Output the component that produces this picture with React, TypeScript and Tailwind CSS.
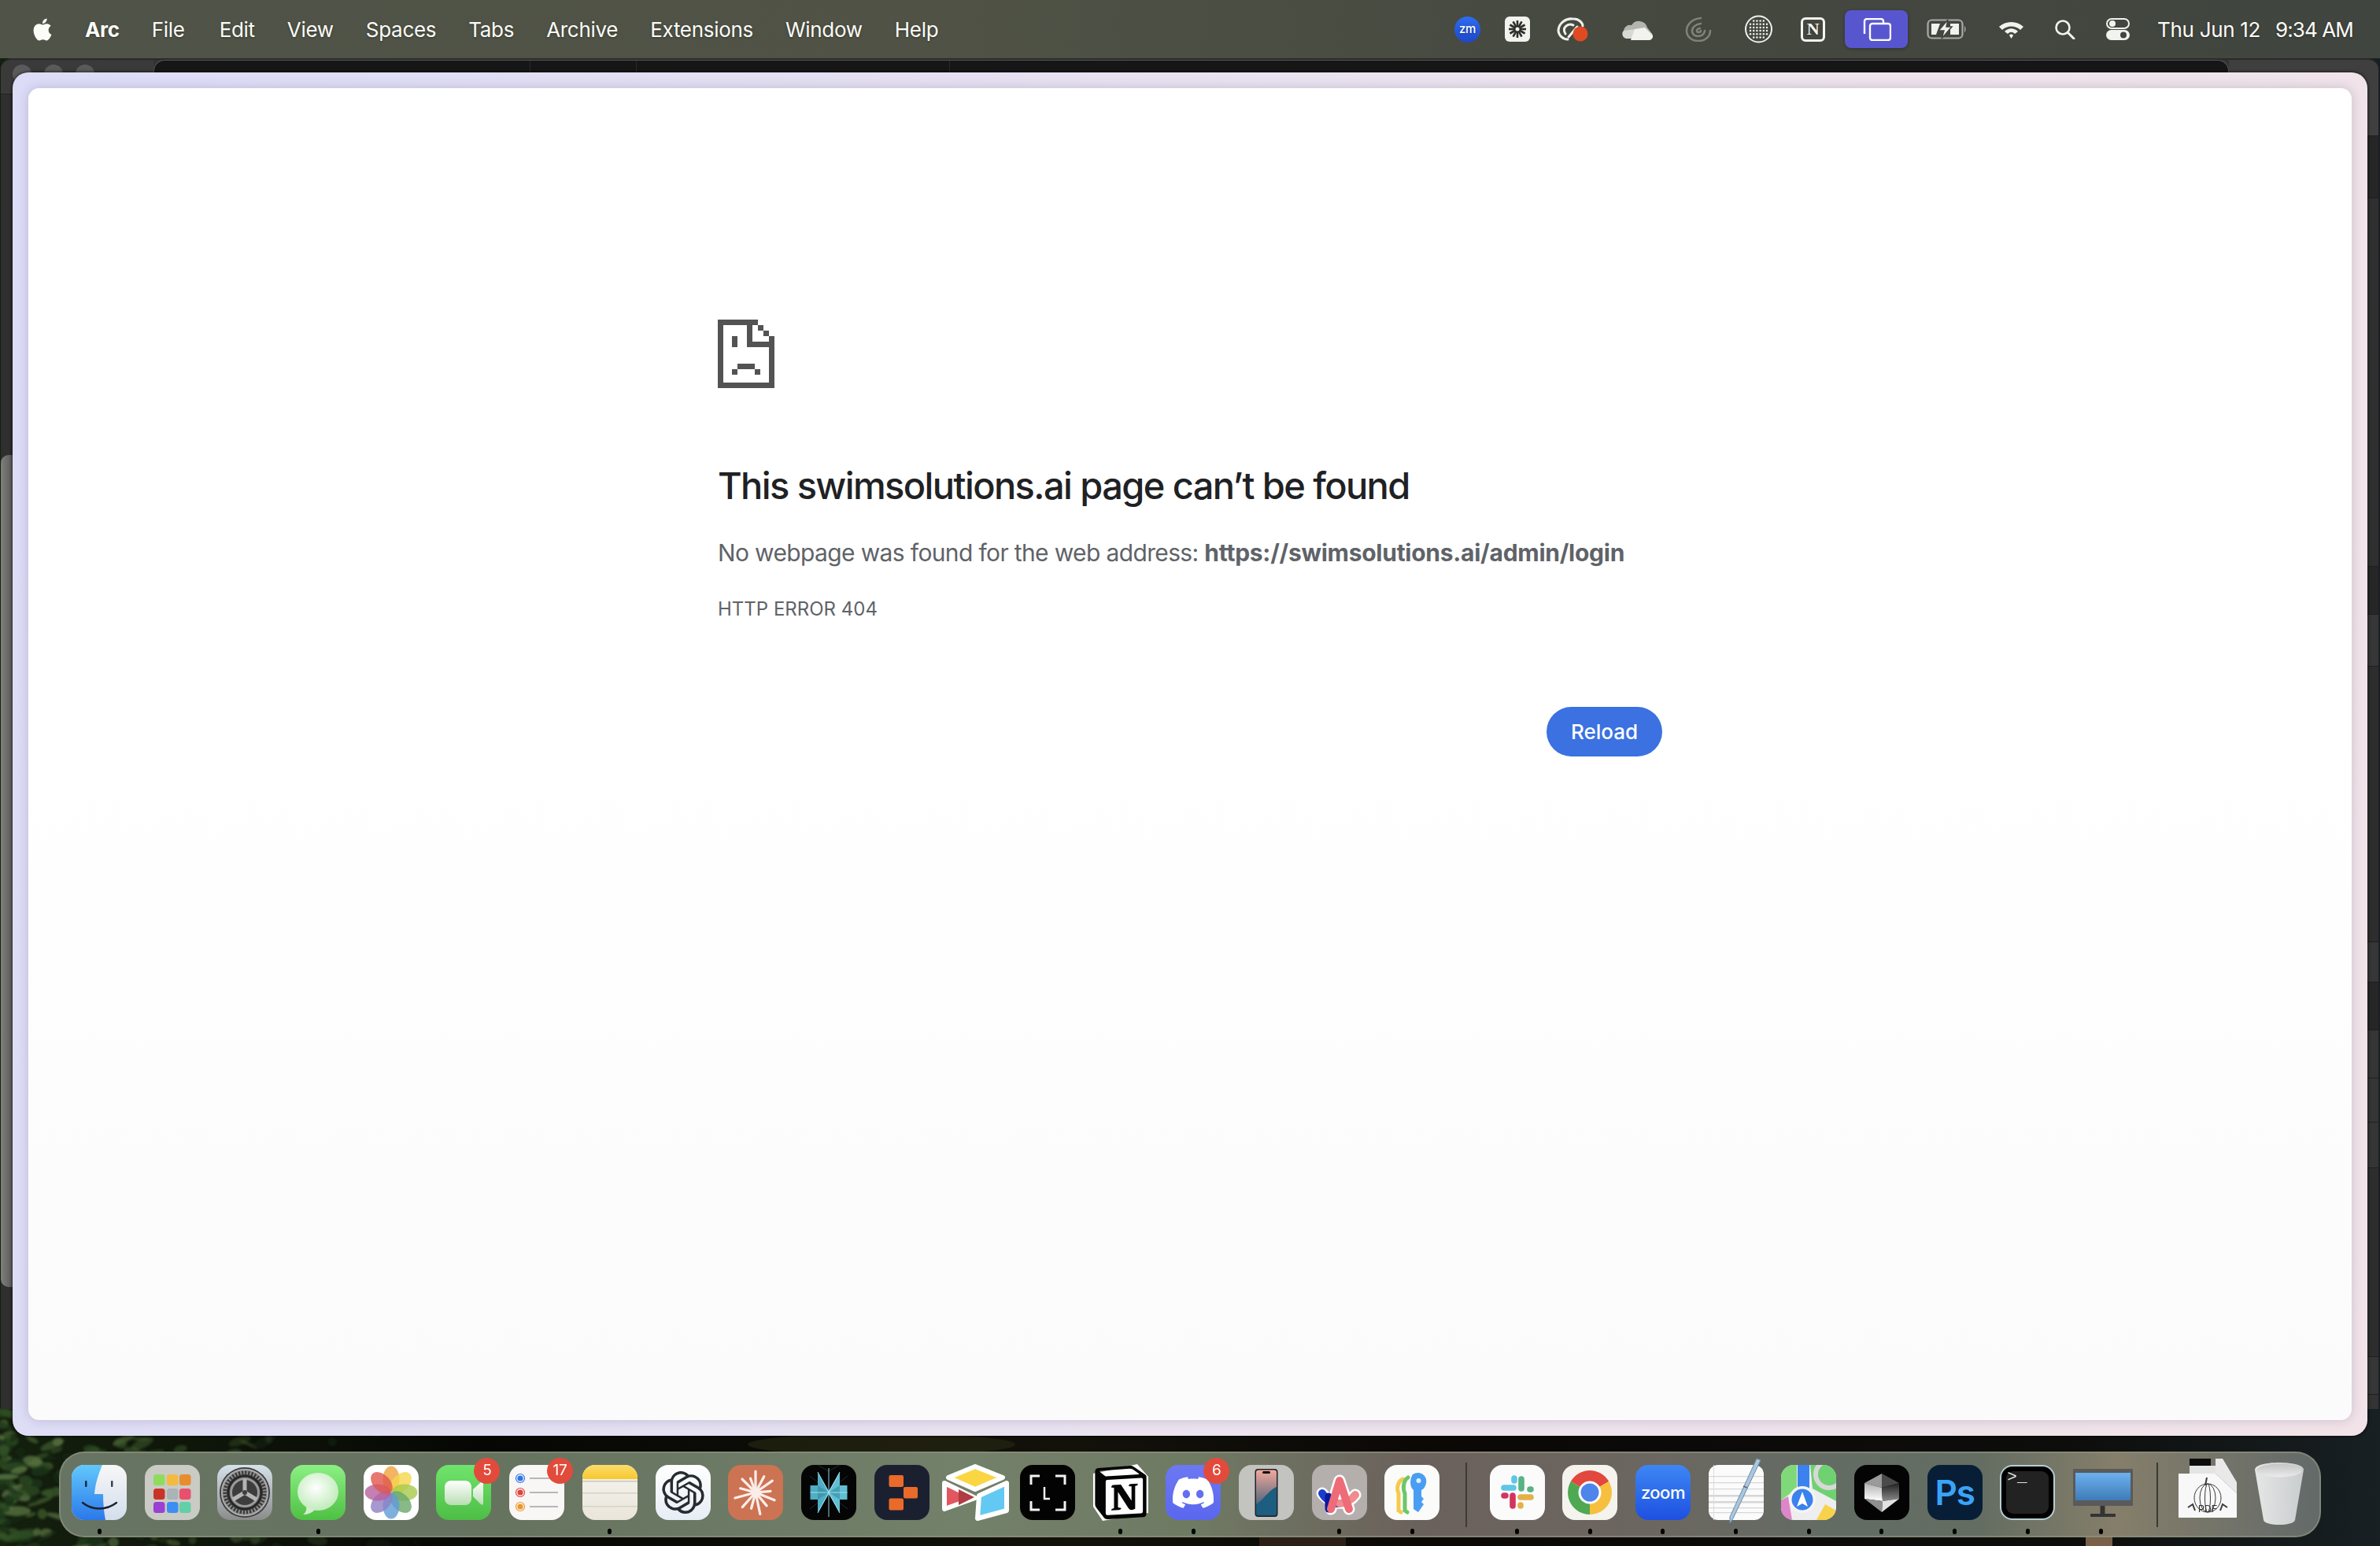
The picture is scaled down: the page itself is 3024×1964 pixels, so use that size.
import React from "react";
import { SiOpenai, SiDiscord, SiNotion, SiApple } from "react-icons/si";

const Squircle = ({ fill, children, stroke }: { fill: string; children?: React.ReactNode; stroke?: string }) => (
  <svg width="70" height="70" viewBox="0 0 70 70" className="overflow-visible block">
    <rect x="0" y="0" width="70" height="70" rx="16" fill={fill} stroke={stroke} />
    {children}
  </svg>
);

const Grad = ({ id, a, b, x2 = 0, y2 = 1 }: { id: string; a: string; b: string; x2?: number; y2?: number }) => (
  <linearGradient id={id} x1="0" y1="0" x2={x2} y2={y2}>
    <stop offset="0" stopColor={a} />
    <stop offset="1" stopColor={b} />
  </linearGradient>
);

const Finder = () => (
  <svg width="70" height="70" viewBox="0 0 70 70" className="block">
    <defs>
      <Grad id="fb" a="#62c8fb" b="#2b78ea" />
      <Grad id="fw" a="#f7f7f8" b="#d3deec" />
    </defs>
    <rect width="70" height="70" rx="16" fill="url(#fw)" />
    <path d="M16 0H39C34 12 30 24 29 37H40C40 48 41 60 43 70H16A16 16 0 0 1 0 54V16A16 16 0 0 1 16 0Z" fill="url(#fb)" />
    <rect x="17" y="20" width="2.5" height="8" rx="1" fill="#1d2a3a" />
    <rect x="50" y="20" width="2.5" height="8" rx="1" fill="#3a4250" />
    <path d="M14 48C26 58 44 58 57 48" fill="none" stroke="#1b2230" strokeWidth="2.4" strokeLinecap="round" />
  </svg>
);

const Launchpad = () => {
  const cols = [11, 28, 44];
  const rows = [12, 30, 47];
  const c = ["#8fdc5c", "#f4ba3e", "#e98c2f", "#c9342a", "#aab3b6", "#e9506d", "#9a40d2", "#3d8ef2", "#62cfa9"];
  return (
    <Squircle fill="#c9cbc4">
      {rows.map((y, r) => cols.map((x, i) => <rect key={`${r}${i}`} x={x} y={y} width="14.5" height="14" rx="3.5" fill={c[r * 3 + i]} />))}
    </Squircle>
  );
};

const Settings = () => (
  <svg width="70" height="70" viewBox="0 0 70 70" className="block">
    <defs><Grad id="sg" a="#d5e2ea" b="#8b8b8b" /></defs>
    <rect width="70" height="70" rx="16" fill="url(#sg)" />
    <circle cx="35" cy="35" r="32" fill="#3a3a3b" />
    <circle cx="35" cy="35" r="29" fill="none" stroke="#a8a8a8" strokeWidth="2.5" />
    <circle cx="35" cy="35" r="25.5" fill="none" stroke="#8d8d8d" strokeWidth="5" strokeDasharray="2 2.2" />
    <circle cx="35" cy="35" r="21" fill="#3d3d3e" stroke="#222" strokeWidth="1.5" />
    <circle cx="35" cy="35" r="17.5" fill="none" stroke="#9a9a9a" strokeWidth="3" />
    <path d="M35 35L35 18M35 35L20 44M35 35L50 44" stroke="#b5b5b5" strokeWidth="5" />
    <circle cx="35" cy="35" r="3" fill="#3d3d3e" />
  </svg>
);

const Messages = () => (
  <svg width="70" height="70" viewBox="0 0 70 70" className="block">
    <defs>
      <Grad id="mg" a="#8bf083" b="#4fc044" />
      <radialGradient id="mb" cx=".45" cy=".4" r=".7"><stop offset="0" stopColor="#ffffff" /><stop offset="1" stopColor="#b6e8ae" /></radialGradient>
    </defs>
    <rect width="70" height="70" rx="16" fill="url(#mg)" />
    <ellipse cx="35" cy="34" rx="26" ry="24" fill="url(#mb)" />
    <path d="M20 52C21 58 19 61 16 63C22 63 27 61 31 57Z" fill="#cfeecb" />
  </svg>
);

const Photos = () => {
  const p = ["#f0a13c", "#f5d64c", "#a8c94a", "#6aa76a", "#5f9bd6", "#8f7fc4", "#b85f9e", "#e0564c"];
  return (
    <Squircle fill="#ffffff">
      {p.map((c, i) => (
        <ellipse key={i} cx="35" cy="18" rx="10.5" ry="16.5" fill={c} fillOpacity="0.8" transform={`rotate(${i * 45} 35 35)`} />
      ))}
    </Squircle>
  );
};

const FaceTime = () => (
  <svg width="70" height="70" viewBox="0 0 70 70" className="block">
    <defs>
      <Grad id="ft" a="#6fe46c" b="#4dbd45" />
      <Grad id="fc" a="#ffffff" b="#b9deb4" />
    </defs>
    <rect width="70" height="70" rx="16" fill="url(#ft)" />
    <rect x="11" y="20" width="34" height="31" rx="8" fill="url(#fc)" />
    <path d="M47 31L57 22C58 21 60 21 60 23V49C60 51 58 51 57 50L47 40Z" fill="url(#fc)" />
  </svg>
);

const Reminders = () => (
  <Squircle fill="#f8f7f5">
    {[[17, "#2f74e8"], [35, "#e2423a"], [53, "#ec962c"]].map(([y, c]) => (
      <g key={String(c)}>
        <circle cx="14" cy={y as number} r="5.5" fill="none" stroke={c as string} strokeWidth="1.2" />
        <circle cx="14" cy={y as number} r="3.6" fill={c as string} />
        <rect x="26" y={(y as number) - 1} width="36" height="2" fill="#b7b7b7" />
      </g>
    ))}
  </Squircle>
);

const Notes = () => (
  <svg width="70" height="70" viewBox="0 0 70 70" className="block">
    <defs>
      <Grad id="ny" a="#fbdc6b" b="#f8c82e" />
      <Grad id="np" a="#f7f5ef" b="#e9e5da" />
    </defs>
    <rect width="70" height="70" rx="16" fill="url(#np)" />
    <path d="M16 0H54A16 16 0 0 1 70 16V18H0V16A16 16 0 0 1 16 0Z" fill="url(#ny)" />
    <rect y="20" width="70" height="1.5" fill="#c9c6bc" />
    <rect y="35" width="70" height="1.5" fill="#d5d2c8" />
    <rect y="52" width="70" height="1.5" fill="#d5d2c8" />
  </svg>
);

const ChatGPT = () => (
  <div className="relative w-[70px] h-[70px] rounded-[16px] bg-gradient-to-b from-white to-[#e7edf5] flex items-center justify-center">
    <SiOpenai size={54} color="#262b30" />
  </div>
);

const Claude = () => {
  const rays = [[0, 27], [28, 23], [55, 26], [85, 19], [112, 26], [140, 22], [168, 28], [195, 21], [222, 25], [255, 27], [285, 20], [315, 24], [340, 19]];
  return (
    <Squircle fill="#cc7354">
      {rays.map(([a, l], i) => (
        <line key={i} x1="35" y1="35" x2="35" y2={35 - l} stroke="#fbeee8" strokeWidth="3.2" strokeLinecap="round" transform={`rotate(${a} 35 35)`} />
      ))}
    </Squircle>
  );
};

const Perplexity = () => (
  <Squircle fill="#050505">
    <path d="M35 8L21 -0M35 8L49 0M11 14L35 33L59 14M11 56L35 37L59 56" fill="none" stroke="#1d2c30" strokeWidth="1" />
    <path d="M35 33L21 9V26H11.5V44H21V61L35 37Z" fill="#4fadc4" />
    <path d="M35 33L49 9V26H58.5V44H49V61L35 37Z" fill="#62bfd3" />
    <path d="M21 26L35 35L21 44Z" fill="#3f97ae" />
    <path d="M49 26L35 35L49 44Z" fill="#45a0b6" />
    <path d="M35 4V66M21 9L49 61M49 9L21 61M11.5 35H58.5" stroke="#a4e8f2" strokeWidth="0.9" />
  </Squircle>
);

const Orange = () => (
  <Squircle fill="#1b2030">
    <rect x="18.5" y="13" width="18.5" height="15" rx="2" fill="#ea6a2a" />
    <rect x="37" y="28" width="18" height="14.5" rx="2" fill="#ea6a2a" />
    <rect x="18.5" y="42.5" width="18.5" height="15" rx="2" fill="#ea6a2a" />
  </Squircle>
);

const Airtable = () => (
  <svg width="87" height="74" viewBox="0 0 87 74" className="absolute left-[-8px] top-[-2px] overflow-visible">
    <g stroke="#ffffff" strokeWidth="6" strokeLinejoin="round">
      <path d="M44 4L79 18L44 33L10 18Z" fill="#fbd643" />
      <path d="M5 25L44 44L5 58Z" fill="#e2565f" />
      <path d="M49 41L84 25V60L47 70Z" fill="#63c9f2" />
    </g>
    <path d="M23 33L43 43L23 53Z" fill="#b03c44" />
  </svg>
);

const Lens = () => (
  <Squircle fill="#030303">
    <path d="M14 25V14H25M45 14H57V25M14 46V57H25M45 57H57V46" fill="none" stroke="#f2f2f2" strokeWidth="3" />
    <path d="M31 28V43H38" fill="none" stroke="#f2f2f2" strokeWidth="2.5" />
  </Squircle>
);

const Notion = () => (
  <div className="relative w-[70px] h-[70px]">
    <svg width="74" height="76" viewBox="0 0 74 76" className="absolute left-[-2px] top-[-3px]">
      <path d="M2 14L58 2L72 18V64L14 74L2 56Z" fill="#ffffff" />
    </svg>
    <div className="absolute left-[1px] top-[1px]">
      <SiNotion size={68} color="#050505" />
    </div>
  </div>
);

const Discord = () => (
  <div className="w-[70px] h-[70px] rounded-[16px] bg-gradient-to-b from-[#6d78f2] to-[#5a67ee] flex items-center justify-center">
    <SiDiscord size={52} color="#ffffff" />
  </div>
);

const Phone = () => (
  <svg width="70" height="70" viewBox="0 0 70 70" className="block">
    <defs><Grad id="ph" a="#f2a99b" b="#1d4f73" /></defs>
    <rect width="70" height="70" rx="16" fill="#c3c3c0" />
    <rect x="20.5" y="5" width="29" height="61" rx="4" fill="#1e2226" />
    <rect x="22" y="6.5" width="26" height="58" rx="3" fill="url(#ph)" />
    <path d="M22 50C30 46 38 32 48 28V61a3 3 0 0 1-3 3H25a3 3 0 0 1-3-3Z" fill="#1c5d80" />
    <rect x="30" y="8" width="10" height="3" rx="1.5" fill="#0c0c0c" />
  </svg>
);

const Arc = () => (
  <Squircle fill="#b4afad">
    <g fill="none" strokeLinecap="round" strokeLinejoin="round">
      <path d="M24 56L35 20L47 56M13 36C18 44 40 58 55 38" stroke="#ffffff" strokeWidth="15" />
      <path d="M13 36C16 42 24 48 32 49" stroke="#1a3ecb" strokeWidth="10" />
      <path d="M21 40L21 56" stroke="#0a1a9a" strokeWidth="9" />
      <path d="M35 49C42 49 50 45 55 38" stroke="#ef8c8f" strokeWidth="10" />
      <path d="M24 56L35 20L47 56" stroke="#ee6b78" strokeWidth="10" />
    </g>
  </Squircle>
);

const Passwords = () => (
  <Squircle fill="#fbfbf9">
    <path d="M24 18C17 20 15 30 18 36V58L21 60" fill="none" stroke="#f3cb4d" strokeWidth="5" strokeLinecap="round" />
    <path d="M30 16C24 20 23 30 26 36V58L29 60" fill="none" stroke="#6cc66b" strokeWidth="5" strokeLinecap="round" />
    <path d="M36 12A11 11 0 0 1 51 14C56 20 52 30 47 32V40L50 43L47 47L50 50L43 60L37 56V32C32 28 32 18 36 12Z" fill="#4a9ef2" />
    <circle cx="43.5" cy="20" r="3" fill="#dff0ff" />
  </Squircle>
);

const Slack = () => (
  <Squircle fill="#fbfbfb">
    <g fill="none" strokeWidth="7.6" strokeLinecap="round">
      <path d="M18 29H30M31 17V20" stroke="#5fc6e6" />
      <path d="M40 18V30M51 31H52" stroke="#58b384" />
      <path d="M39 41H52M39 51V52" stroke="#e3b04a" />
      <path d="M29 39V52M18 39H20" stroke="#d3345e" />
    </g>
  </Squircle>
);

const Chrome = () => (
  <Squircle fill="#f4f3ee">
    <path d="M35 35L10.8 21A28 28 0 0 1 59.2 21Z" fill="#e2483d" />
    <path d="M35 35L10.8 21A28 28 0 0 0 35 63Z" fill="#4fa852" />
    <path d="M35 35L59.2 21A28 28 0 0 1 35 63Z" fill="#f7bf3e" />
    <circle cx="35" cy="35" r="14.5" fill="#ffffff" />
    <circle cx="35" cy="35" r="11.5" fill="#4e85ea" />
  </Squircle>
);

const Zoom = () => (
  <div className="w-[70px] h-[70px] rounded-[16px] bg-gradient-to-b from-[#3f86f4] to-[#1f4fe0] flex items-center justify-center text-white text-[22px] font-medium tracking-[-0.5px] [font-family:Inter,sans-serif]">
    zoom
  </div>
);

const TextEdit = () => (
  <svg width="70" height="70" viewBox="0 0 70 70" className="block overflow-visible">
    <rect width="70" height="70" rx="12" fill="#fbfbfb" />
    {[14, 22, 30, 38, 46, 54, 60].map((y) => <rect key={y} y={y} width="70" height={y === 46 || y === 38 ? 2.5 : 1.2} fill="#d6d6d6" />)}
    <rect x="6" width="1" height="70" fill="#dcdcdc" />
    <path d="M61 -8L66 -6L31 68L27 74L27 66Z" fill="#a9c7de" stroke="#6f8ba3" strokeWidth="1" />
    <path d="M44 27L49 29" stroke="#59677a" strokeWidth="1.5" />
  </svg>
);

const Maps = () => (
  <svg width="70" height="70" viewBox="0 0 70 70" className="block">
    <defs><clipPath id="mc"><rect width="70" height="70" rx="16" /></clipPath></defs>
    <g clipPath="url(#mc)">
      <rect width="70" height="70" fill="#eeeeee" />
      <path d="M0 0H20V30L0 45Z" fill="#80d978" />
      <path d="M37 0H70V46L40 30Z" fill="#6fd172" />
      <path d="M0 45L9 40L14 70H0Z" fill="#de86c9" />
      <path d="M45 70L56 50L70 58V70Z" fill="#f7d24a" />
      <rect x="21" y="0" width="15" height="36" fill="#3b82ee" />
      <circle cx="61" cy="12" r="17" fill="none" stroke="#d8d8d8" strokeWidth="6" />
      <circle cx="27" cy="44" r="17" fill="#f4f4f4" />
      <circle cx="27" cy="44" r="13.5" fill="#3b82ee" />
      <path d="M27 34L34 53L27 49L20 53Z" fill="#ffffff" />
    </g>
  </svg>
);

const Crystal = () => (
  <svg width="70" height="70" viewBox="0 0 70 70" className="block">
    <defs>
      <Grad id="c1" a="#202020" b="#8a8a8a" />
      <Grad id="c2" a="#b0b0b0" b="#ffffff" />
    </defs>
    <rect width="70" height="70" rx="16" fill="#040404" />
    <path d="M35 11L13 23L35 29Z" fill="#9a9a9a" />
    <path d="M35 11L57 23L35 29Z" fill="#4a4a4a" />
    <path d="M13 23L35 29L36 46L13 43Z" fill="url(#c2)" />
    <path d="M57 23L35 29L36 46L57 43Z" fill="url(#c1)" />
    <path d="M13 43L36 46L35 60Z" fill="#8f8f8f" />
    <path d="M57 43L36 46L35 60Z" fill="#e2e2e2" />
  </svg>
);

const Photoshop = () => (
  <div className="w-[70px] h-[70px] rounded-[16px] bg-[#071e36] flex items-center justify-center text-[#3aa3f8] text-[44px] font-semibold tracking-[-1px] [font-family:Inter,sans-serif]">
    Ps
  </div>
);

const Terminal = () => (
  <div className="w-[70px] h-[70px] rounded-[16px] bg-black border-[2px] border-[#b6cdd4] p-[6px]">
    <div className="relative w-full h-full rounded-[9px] bg-[#222222]">
      <span className="absolute left-[1px] top-[-8px] text-[#e8e8e8] text-[21px] [font-family:'Liberation_Mono',monospace]">&gt;_</span>
    </div>
  </div>
);

const Monitor = () => (
  <svg width="76" height="62" viewBox="0 0 76 62" className="absolute left-[0px] top-[5px]">
    <defs><Grad id="mn" a="#6cb0ef" b="#3e7cb6" /></defs>
    <rect width="76" height="47" rx="1" fill="#5a5a5a" />
    <rect x="3" y="5" width="70" height="35" fill="url(#mn)" />
    <rect x="34.5" y="47" width="6" height="10" fill="#333" />
    <rect x="22" y="57" width="32" height="4" rx="1" fill="#333" />
  </svg>
);

const Pdf = () => (
  <svg width="74" height="76" viewBox="0 0 74 76" className="absolute left-[0px] top-[-8px] overflow-visible">
    <path d="M0 19H47L74 44V75H0Z" fill="#f8f8f8" />
    <rect x="14" y="0" width="27" height="9" fill="#0c0c0c" />
    <rect x="14" y="9" width="35" height="10" fill="#e4e4e4" />
    <path d="M47 0H56L74 30V44L47 19Z" fill="#e9e9e9" />
    <g fill="none" stroke="#3a3a3a" strokeWidth="1">
      <path d="M36 24L34 34" strokeWidth="2" />
      <ellipse cx="37" cy="50" rx="17" ry="18" />
      <ellipse cx="37" cy="50" rx="10" ry="18" />
      <ellipse cx="37" cy="50" rx="3.5" ry="18" />
      <path d="M12 62L18 58L21 66M62 62L56 58L53 66" strokeWidth="2" />
    </g>
    <text x="37" y="68" fontSize="12" textAnchor="middle" fill="#333" fontFamily="Liberation Sans, sans-serif">PDF</text>
  </svg>
);

const Trash = () => (
  <svg width="64" height="80" viewBox="0 0 64 80" className="absolute left-[3px] top-[-4px]">
    <defs><Grad id="tr" a="#e6e6e6" b="#c9cdce" x2={1} y2={0} /><Grad id="tb" a="#c4c4c4" b="#ebebeb" /></defs>
    <path d="M1 10C1 -2 63 -2 63 10L52 74C50 82 14 82 12 74Z" fill="url(#tr)" />
    <ellipse cx="32" cy="11" rx="29" ry="8.5" fill="url(#tb)" />
  </svg>
);

type DockItem = { el: React.ReactNode; on?: boolean; badge?: string; sep?: "a" | "b" };

const items: DockItem[] = [
  { el: <Finder />, on: true },
  { el: <Launchpad /> },
  { el: <Settings /> },
  { el: <Messages />, on: true },
  { el: <Photos /> },
  { el: <FaceTime />, badge: "5" },
  { el: <Reminders />, badge: "17" },
  { el: <Notes />, on: true },
  { el: <ChatGPT /> },
  { el: <Claude /> },
  { el: <Perplexity /> },
  { el: <Orange /> },
  { el: <Airtable /> },
  { el: <Lens /> },
  { el: <Notion />, on: true },
  { el: <Discord />, on: true, badge: "6" },
  { el: <Phone /> },
  { el: <Arc />, on: true },
  { el: <Passwords />, on: true, sep: "a" },
  { el: <Slack />, on: true },
  { el: <Chrome />, on: true },
  { el: <Zoom />, on: true },
  { el: <TextEdit />, on: true },
  { el: <Maps />, on: true },
  { el: <Crystal />, on: true },
  { el: <Photoshop />, on: true },
  { el: <Terminal />, on: true },
  { el: <Monitor />, on: true, sep: "b" },
  { el: <Pdf /> },
  { el: <Trash /> },
];

const Dock = () => (
  <div className="relative w-[2874px] h-[109px] ml-[75px] rounded-[32px] border-[2px] border-[#8b917f]/70 pl-[14px] pt-[15px] flex items-start gap-[22.7px] bg-[linear-gradient(90deg,#687463_0%,#66735f_20%,#73806a_40%,#6f7a63_50%,#6b615c_60%,#6c6660_70%,#636c63_78%,#646d62_85%,#857e6a_91%,#636a69_100%)]">
    {items.map((it, i) => (
      <React.Fragment key={i}>
        <div className="relative w-[70px] h-[70px] shrink-0">
          {it.el}
          {it.on && <div className="absolute left-[32.5px] top-[81px] w-[5px] h-[7px] rounded-full bg-black" />}
          {it.badge && (
            <div className="absolute left-[48px] top-[-9px] w-[33px] h-[33px] rounded-full bg-[#e24b3b] text-white text-[19px] flex items-center justify-center [font-family:Inter,sans-serif]">
              {it.badge}
            </div>
          )}
        </div>
        {it.sep === "a" && <div className="w-[2px] h-[82px] mt-[-3px] ml-[10.4px] mr-[5.4px] bg-[#3a3a36] shrink-0" />}
        {it.sep === "b" && <div className="w-[2px] h-[82px] mt-[-3px] ml-[13.2px] mr-[3.4px] bg-[#3a3a36] shrink-0" />}
      </React.Fragment>
    ))}
  </div>
);

const rnd = (seed: number) => {
  const x = Math.sin(seed * 12.9898) * 43758.5453;
  return x - Math.floor(x);
};

const Wallpaper = () => {
  const blobs = Array.from({ length: 240 }, (_, i) => {
    const t = rnd(i + 1);
    const x = t * t * 560;
    const y = 1790 + rnd(i + 300) * 180;
    const near = 1 - x / 560;
    const c = ["#2f4f24", "#1f3a1b", "#43612f", "#152813", "#5f7a47"][Math.floor(rnd(i + 700) * 5)];
    return <ellipse key={i} cx={x} cy={y} rx={4 + rnd(i + 40) * 14} ry={2 + rnd(i + 90) * 5} transform={`rotate(${rnd(i + 11) * 60 - 30} ${x} ${y})`} fill={c} fillOpacity={0.75 * near} />;
  });
  return (
    <svg width="3024" height="1964" viewBox="0 0 3024 1964" className="absolute inset-0">
      <defs>
        <linearGradient id="wp" x1="0" y1="0" x2="1" y2="0">
          <stop offset="0" stopColor="#14200e" />
          <stop offset=".2" stopColor="#060704" />
          <stop offset=".45" stopColor="#12110a" />
          <stop offset=".6" stopColor="#0b0806" />
          <stop offset=".87" stopColor="#0d0d0c" />
          <stop offset="1" stopColor="#182023" />
        </linearGradient>
        <filter id="soft"><feGaussianBlur stdDeviation="1.5" /></filter>
      </defs>
      <rect width="3024" height="1964" fill="url(#wp)" />
      <g filter="url(#soft)">{blobs}</g>
      <ellipse cx="1120" cy="1835" rx="170" ry="14" fill="#2a2a14" fillOpacity=".6" />
      <rect x="1600" y="1953" width="110" height="11" fill="#2c2016" />
      <rect x="2650" y="1953" width="34" height="11" fill="#7a6048" />
    </svg>
  );
};

const Back = () => {
  const right = [
    ["h-[97px]", "bg-[#3f3f3f]"],
    ["h-[79px]", "bg-[#262626]"],
    ["h-[468px]", "bg-[#2f2f2f]"],
    ["h-[61px]", "bg-[#262626]"],
    ["h-[66px]", "bg-[#363636]"],
    ["h-[350px]", "bg-[#2d2d2d]"],
    ["h-[51px]", "bg-[#363636]"],
    ["h-[61px]", "bg-[#262626]"],
    ["h-[61px]", "bg-[#353535]"],
    ["h-[56px]", "bg-[#353535]"],
    ["h-[58px]", "bg-[#353535]"],
    ["h-[240px]", "bg-[#2d2d2d]"],
    ["h-[48px]", "bg-[#363636]"],
  ];
  return (
    <div className="absolute left-[1px] top-0 w-[3021px] h-[1716px] rounded-t-[14px] bg-[#333333] border-t-[2px] border-[#2a2a2a] flex overflow-hidden">
      <div className="w-[194px] shrink-0 flex flex-col">
        <div className="h-[44px] bg-[#3a3a3a] flex items-start gap-[16px] pl-[15px] pt-[6px] border-b border-[#222222]">
          <div className="w-[24px] h-[24px] rounded-full bg-[#5a5a5a]" />
          <div className="w-[24px] h-[24px] rounded-full bg-[#5a5a5a]" />
          <div className="w-[24px] h-[24px] rounded-full bg-[#5a5a5a]" />
        </div>
        <div className="flex-1 bg-[#2f2f2f] pt-[458px]">
          <div className="w-[15px] h-[1057px] rounded-l-[10px] bg-gradient-to-r from-[#7f7f7c] to-[#5b5b5a]" />
        </div>
      </div>
      <div className="flex-1 h-[18px] bg-[#161616] rounded-t-[14px] border-t border-x border-[#555555] flex">
        <div className="w-[478px] border-r border-[#2a2a2a]" />
        <div className="w-[135px] border-r border-[#2a2a2a]" />
        <div className="w-[398px] border-r border-[#2a2a2a]" />
      </div>
      <div className="w-[190px] shrink-0 flex flex-col items-end">
        {right.map(([h, b], i) => (
          <div key={i} className={`${h} ${b} w-full shrink-0 border-b border-[#1f1f1f]`} />
        ))}
      </div>
    </div>
  );
};

const DeadPage = () => (
  <svg width="72" height="87" viewBox="96 78 216 261" shapeRendering="crispEdges" className="block">
    <g fill="#535353">
      <rect x="96" y="78" width="153" height="21" />
      <rect x="96" y="78" width="21" height="261" />
      <rect x="96" y="318" width="216" height="21" />
      <rect x="291" y="141" width="21" height="198" />
      <rect x="207" y="78" width="21" height="105" />
      <rect x="207" y="162" width="105" height="21" />
      <rect x="249" y="99" width="21" height="21" />
      <rect x="270" y="120" width="21" height="21" />
      <rect x="150" y="141" width="21" height="42" />
      <rect x="171" y="246" width="67" height="21" />
      <rect x="150" y="267" width="21" height="21" />
      <rect x="238" y="267" width="21" height="21" />
    </g>
  </svg>
);

const Frame = () => (
  <div className="absolute left-[16px] top-[18px] w-[2992px] h-[1732px] rounded-[20px] p-[20px] bg-[linear-gradient(100deg,#dcdcf8_0%,#e2dff3_25%,#ece3ee_60%,#f1e3e8_100%)] shadow-[0_0_4px_rgba(0,0,0,0.8)]">
    <div className="h-full rounded-[14px] bg-gradient-to-b from-white via-white to-[#fbfbfb] shadow-[0_0_14px_rgba(70,60,90,0.22)] [font-family:Inter,sans-serif]">
      <div className="w-[1200px] mx-auto pt-[294px]">
        <DeadPage />
        <h1 className="mt-[94px] text-[47px] leading-[60px] font-[550] tracking-[-1.6px] text-[#202124]">This swimsolutions.ai page can’t be found</h1>
        <p className="mt-[30px] text-[30px] leading-[50px] tracking-[-0.64px] text-[#5f6368]">
          No webpage was found for the web address: <strong className="font-bold tracking-[-0.26px]">https://swimsolutions.ai/admin/login</strong>
        </p>
        <div className="mt-[31px] text-[24px] leading-[32px] text-[#5f6368]">HTTP ERROR 404</div>
        <div className="mt-[108px] flex justify-end">
          <button className="w-[147px] h-[63px] rounded-full bg-[#3b71e0] text-white text-[26px] font-medium">Reload</button>
        </div>
      </div>
    </div>
  </div>
);

const Zm = () => (
  <div className="w-[33px] h-[33px] rounded-full bg-gradient-to-b from-[#2f6cf0] to-[#1f47c8] text-white text-[15px] font-medium flex items-center justify-center">zm</div>
);
const Star = () => (
  <svg width="32" height="32" viewBox="0 0 32 32" className="block">
    <rect width="32" height="32" rx="6" fill="#f2f2ef" />
    {[0, 30, 60, 90, 120, 150].map((a) => (
      <line key={a} x1="16" y1="5" x2="16" y2="27" stroke="#2d2d2a" strokeWidth="2.6" transform={`rotate(${a} 16 16)`} />
    ))}
    <circle cx="16" cy="16" r="2.5" fill="#f2f2ef" />
  </svg>
);
const Ring = () => (
  <svg width="40" height="32" viewBox="0 0 40 32" className="block">
    <path d="M20 3C12 2 3 8 2 17C2 24 8 29 14 29M22 3C28 3 33 8 33 12M11 22C6 14 14 8 21 11M15 26L26 13" fill="none" stroke="#f0f0ec" strokeWidth="3" strokeLinecap="round" />
    <circle cx="30" cy="22" r="9.5" fill="#e04a23" />
  </svg>
);
const Cloud = () => (
  <svg width="40" height="27" viewBox="0 0 40 27" className="block">
    <path d="M3 15A8 8 0 0 1 13 8A11 11 0 0 1 33 11L40 20L20 25Z" fill="#b4b4b0" />
    <path d="M3 15L17 13L33 25H6A6 6 0 0 1 3 15Z" fill="#d8d8d4" />
    <path d="M17 13L30 11L40 21A5 5 0 0 1 36 27H12Z" fill="#f2f2ee" />
  </svg>
);
const Spiral = () => (
  <svg width="34" height="32" viewBox="0 0 34 32" className="block">
    <g fill="none" stroke="#7f827c" strokeWidth="2.6" strokeLinecap="round">
      <path d="M20 2C9 3 2 10 2 18C2 26 9 31 17 31C25 31 32 26 32 18" />
      <path d="M20 9C13 10 9 14 9 18C9 23 13 25 17 25C21 25 25 22 25 18" />
      <path d="M19 15C16 15 15 17 15 18C15 20 16 20 17 20C19 20 20 19 20 18" />
    </g>
  </svg>
);
const DotGrid = () => {
  const pts = [];
  for (let r = 0; r < 6; r++)
    for (let c = 0; c < 6; c++) {
      const edge = (r === 0 || r === 5) && (c === 0 || c === 5);
      if (!edge) pts.push(<circle key={`${r}${c}`} cx={8 + c * 4.2} cy={7.5 + r * 4.2} r="1.25" fill="#f0f0ec" />);
    }
  return (
    <svg width="37" height="36" viewBox="0 0 37 36" className="block">
      <circle cx="18.5" cy="18" r="16.5" fill="none" stroke="#f0f0ec" strokeWidth="2" />
      {pts}
    </svg>
  );
};
const NMark = () => (
  <div className="w-[31px] h-[31px] rounded-[6px] border-[3px] border-[#f4f4f0] text-[#f4f4f0] text-[22px] leading-[24px] font-bold flex items-center justify-center [font-family:'Liberation_Serif',serif]">N</div>
);
const Windows = () => (
  <div className="w-[80px] h-[48px] rounded-[8px] bg-[#5856cf] flex items-center justify-center shadow-[0_1px_4px_rgba(0,0,0,0.3)]">
    <svg width="37" height="29" viewBox="0 0 37 29" className="block">
      <path d="M3 20V4A3 3 0 0 1 6 1H24A3 3 0 0 1 27 4V6" fill="none" stroke="#fff" strokeWidth="2.4" />
      <rect x="10" y="7" width="26" height="21" rx="3" fill="none" stroke="#fff" strokeWidth="2.4" />
    </svg>
  </div>
);
const Battery = () => (
  <svg width="51" height="26" viewBox="0 0 51 26" className="block">
    <rect x="1.5" y="1.5" width="44" height="23" rx="5" fill="none" stroke="#a9aaa6" strokeWidth="2.2" />
    <path d="M6 6H17L12 20H6Z" fill="#f1f1ed" />
    <path d="M30 6H41V20H30Z" fill="#f1f1ed" />
    <path d="M27 1L15 15H22L19 25L32 10H25Z" fill="#f1f1ed" stroke="#40453f" strokeWidth="1.5" />
    <path d="M48 9C50 10 50 16 48 17Z" fill="#a9aaa6" />
  </svg>
);
const Wifi = () => (
  <svg width="35" height="24" viewBox="0 0 35 24" className="block">
    <path d="M2 9C10 1 25 1 33 9L29 13C23 7 12 7 6 13Z" fill="#f2f2ee" />
    <path d="M9 15C14 10 21 10 26 15L22 18C19 15 16 15 13 18Z" fill="#f2f2ee" />
    <path d="M15 20C16 18 19 18 20 20L17.5 24Z" fill="#f2f2ee" />
  </svg>
);
const Search = () => (
  <svg width="27" height="26" viewBox="0 0 27 26" className="block">
    <circle cx="11" cy="11" r="8.5" fill="none" stroke="#f2f2ee" strokeWidth="2.6" />
    <path d="M17.5 17.5L25 25" stroke="#f2f2ee" strokeWidth="3" strokeLinecap="round" />
  </svg>
);
const Control = () => (
  <svg width="30" height="28" viewBox="0 0 30 28" className="block">
    <rect x="1" y="1" width="28" height="12" rx="6" fill="none" stroke="#f2f2ee" strokeWidth="2" />
    <circle cx="8" cy="7" r="4" fill="#f2f2ee" />
    <rect x="0" y="15" width="30" height="13" rx="6.5" fill="#f2f2ee" />
    <circle cx="22" cy="21.5" r="4" fill="#40453f" />
  </svg>
);

const menu = ["Edit", "View", "Spaces", "Tabs", "Archive", "Extensions", "Window", "Help"];

const MenuBar = () => (
  <div className="relative h-[74px] flex items-center pl-[40px] pr-[34px] text-[#fbfbf7] text-[26px] tracking-[-0.3px] bg-[linear-gradient(90deg,#505347_0%,#4f5245_40%,#45483f_70%,#40453f_100%)] [font-family:Inter,sans-serif] [text-shadow:0_1px_3px_rgba(0,0,0,0.35)]">
    <SiApple size={31} className="w-[28px]" />
    <div className="ml-[40px] font-bold">Arc</div>
    <div className="ml-[41px]">File</div>
    <div className="ml-[44px] flex gap-[41px]">
      {menu.map((m) => <span key={m}>{m}</span>)}
    </div>
    <div className="ml-auto flex items-center">
      <Zm />
      <div className="ml-[31px]"><Star /></div>
      <div className="ml-[34px]"><Ring /></div>
      <div className="ml-[42px]"><Cloud /></div>
      <div className="ml-[41px]"><Spiral /></div>
      <div className="ml-[41px]"><DotGrid /></div>
      <div className="ml-[35px]"><NMark /></div>
      <div className="ml-[25px]"><Windows /></div>
      <div className="ml-[24px]"><Battery /></div>
      <div className="ml-[39px]"><Wifi /></div>
      <div className="ml-[37px]"><Search /></div>
      <div className="ml-[39px]"><Control /></div>
      <div className="ml-[35px] w-[135px] whitespace-nowrap">Thu Jun 12</div>
      <div className="ml-[15px] w-[99px] whitespace-nowrap tracking-[-0.9px]">9:34 AM</div>
    </div>
  </div>
);

export default function App() {
  return (
    <div className="relative w-[3024px] h-[1964px] overflow-hidden flex flex-col bg-[#0a0a08]">
      <Wallpaper />
      <MenuBar />
      <div className="relative h-[1770px]">
        <Back />
        <Frame />
      </div>
      <Dock />
    </div>
  );
}
